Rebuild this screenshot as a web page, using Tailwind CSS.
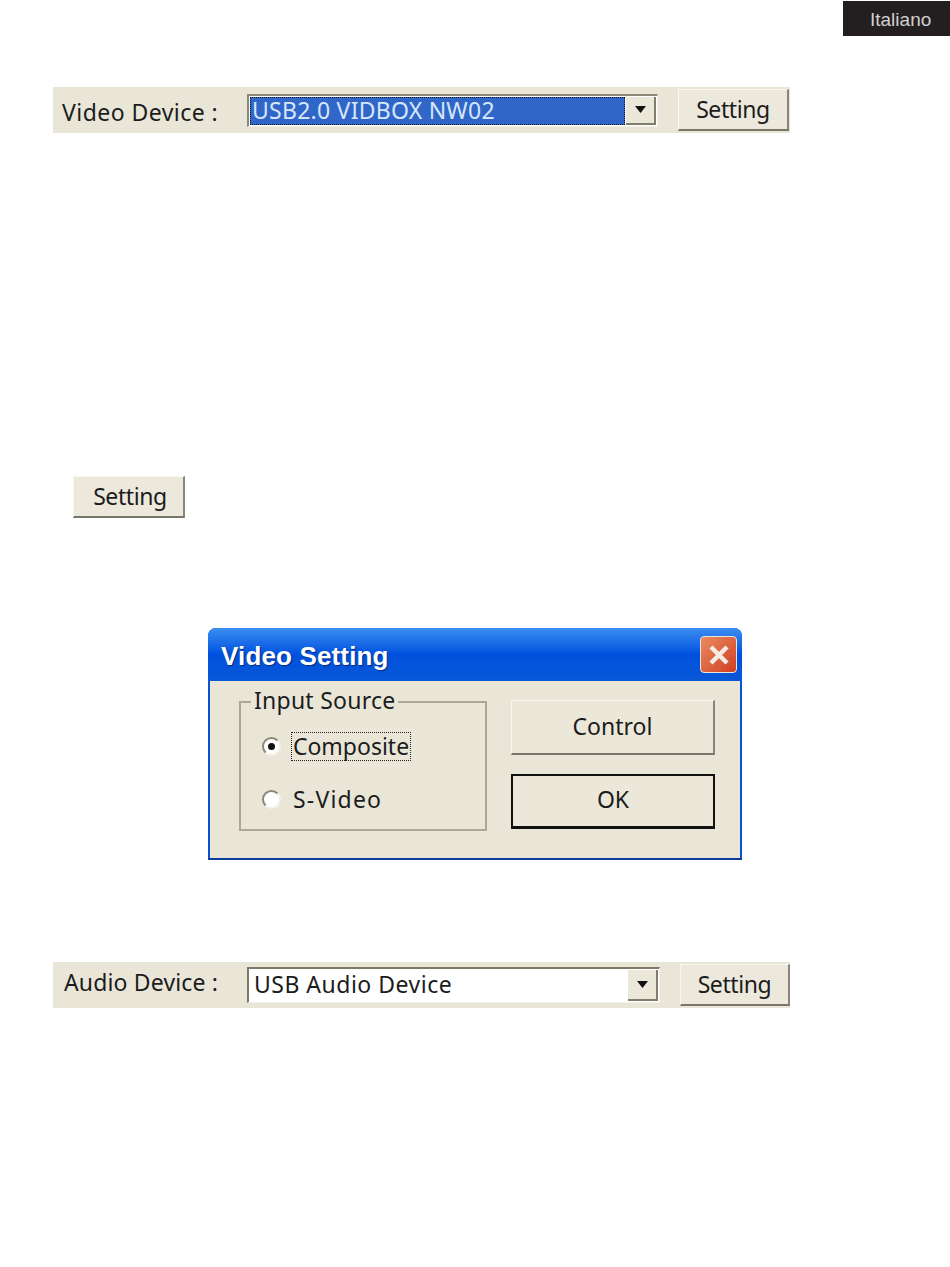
<!DOCTYPE html>
<html lang="en">
<head>
  <meta charset="UTF-8">
  <title>Italiano - Video Setting</title>
  <script src="https://cdn.jsdelivr.net/npm/@tailwindcss/browser@4"></script>
</head>
<body class="bg-white">
<div class="w-[950px] h-[1267px] overflow-hidden font-['Noto_Sans',sans-serif] text-[#1c1c1c] bg-white">

  <!-- section tab -->
  <div class="flex justify-end pt-px">
    <div class="w-[107px] h-[35px] bg-[#231f20] text-[#d0d0d0] text-[19px] font-['Liberation_Sans',sans-serif] flex items-center pl-[27px] pt-[3px]">Italiano</div>
  </div>

  <!-- video device bar -->
  <div class="mt-[51px] ml-[53px] w-[737px] h-[46px] bg-[#e9e6d8] flex items-center">
    <div class="w-[194px] pl-[9px] pt-[4px] text-[23px] leading-none tracking-[0.45px] whitespace-nowrap">Video Device :</div>
    <div class="w-[411px] h-[33px] border-l-2 border-t-2 border-[#8b8876] border-r border-b border-r-[#f4f2e8] border-b-[#f4f2e8] bg-white flex items-center p-px">
      <div class="flex-1 h-full bg-[#2f66c8] border border-dotted border-[#10151f] text-[#d6e6fa] text-[23px] leading-none tracking-[0.25px] pl-px flex items-center whitespace-nowrap">USB2.0 VIDBOX NW02</div>
      <div class="w-[30px] h-full ml-px bg-[#ebe8da] border-r-2 border-b-2 border-[#7f7d6d] flex items-center justify-center">
        <svg width="11" height="7" viewBox="0 0 11 7"><path d="M0 0h11L5.500 7z" fill="#111"/></svg>
      </div>
    </div>
    <div class="ml-5 w-[111px] h-[42px] bg-[#ece9dc] border-t border-l border-[#f8f6ef] border-r-2 border-b-2 border-r-[#87857a] border-b-[#78766a] flex items-center justify-center text-[23px] leading-none tracking-[-0.4px]">Setting</div>
  </div>

  <!-- standalone setting button -->
  <div class="mt-[343px] ml-[73px] w-[112px] h-[42px] bg-[#ece9dc] border-t border-l border-[#f8f6ef] border-r-2 border-b-2 border-r-[#87857a] border-b-[#78766a] flex items-center justify-center text-[23px] leading-none tracking-[-0.4px] pl-[3px]">Setting</div>

  <!-- video setting dialog -->
  <div class="mt-[110px] ml-[208px] w-[534px] h-[232px] rounded-t-[8px] bg-[#0b52d0] px-[2px] border-b-2 border-[#0c3c9e] flex flex-col">
    <div class="h-[53px] -mx-[2px] rounded-t-[8px] bg-gradient-to-b from-[#3b8df0] via-[#0050df] to-[#0a58d6] flex items-center justify-between pl-[13px] pr-[5px]">
      <span class="text-white text-[26px] font-bold font-['Liberation_Sans',sans-serif] pt-[3px] tracking-[0.15px] [text-shadow:1px_1px_1px_#0a2a80]">Video Setting</span>
      <div class="w-[37px] h-[37px] rounded-[4px] border border-[#e8e4e0] bg-gradient-to-br from-[#e88a60] to-[#d03c20] flex items-center justify-center">
        <svg width="24" height="24" viewBox="0 0 24 24"><path d="M4 4l16 16M20 4L4 20" stroke="#f5ece6" stroke-width="4.500" fill="none"/></svg>
      </div>
    </div>
    <div class="flex-1 bg-[#e9e6d8] flex pl-[29px] pt-[19px]">
      <fieldset class="w-[248px] h-[143px] -mt-[12px] border-2 border-[#aaa898] pl-[21px] text-[23px]">
        <legend class="ml-[-11px] px-[3px] text-[23px] leading-[24px] pb-[4px] tracking-[0.25px]">Input Source</legend>
        <div class="flex items-center h-[29px] mt-[16px]">
          <span class="w-[19px] h-[19px] rounded-full bg-white border-2 border-l-[#8b8876] border-t-[#8b8876] border-r-[#f4f2e8] border-b-[#f4f2e8] flex items-center justify-center">
            <span class="w-[7px] h-[7px] rounded-full bg-[#111]"></span>
          </span>
          <span class="ml-[10px] w-[120px] h-[29px] border border-dotted border-[#222] flex items-center justify-center leading-none">Composite</span>
        </div>
        <div class="flex items-center h-[29px] mt-[24px]">
          <span class="w-[19px] h-[19px] rounded-full bg-white border-2 border-l-[#8b8876] border-t-[#8b8876] border-r-[#f4f2e8] border-b-[#f4f2e8]"></span>
          <span class="ml-[12px] leading-none tracking-[1.2px]">S-Video</span>
        </div>
      </fieldset>
      <div class="ml-[24px] flex flex-col gap-[19px]">
        <div class="w-[204px] h-[55px] bg-[#ebe8da] border-t border-l border-[#f8f6ef] border-r-2 border-b-2 border-r-[#87857a] border-b-[#78766a] flex items-center justify-center text-[23px] leading-none pb-[2px]">Control</div>
        <div class="w-[204px] h-[55px] bg-[#ebe8da] border-2 border-[#111] border-b-[3px] flex items-center justify-center text-[23px] leading-none pb-[4px]">OK</div>
      </div>
    </div>
  </div>

  <!-- audio device bar -->
  <div class="mt-[102px] ml-[53px] w-[737px] h-[46px] bg-[#e9e6d8] flex items-center">
    <div class="w-[194px] pl-[11px] pb-[6px] text-[23px] leading-none tracking-[0.15px] whitespace-nowrap">Audio Device :</div>
    <div class="w-[413px] h-[36px] border-l-2 border-t-2 border-[#7d7a69] border-r border-b border-r-[#f4f2e8] border-b-[#f4f2e8] bg-white flex items-center p-px">
      <div class="flex-1 text-[23px] leading-none pl-[4px] pb-[2px] tracking-[0.5px] whitespace-nowrap">USB Audio Device</div>
      <div class="w-[30px] h-full bg-[#ebe8da] border-r-2 border-b-2 border-[#7f7d6d] flex items-center justify-center">
        <svg width="11" height="7" viewBox="0 0 11 7"><path d="M0 0h11L5.500 7z" fill="#111"/></svg>
      </div>
    </div>
    <div class="ml-5 w-[110px] h-[42px] bg-[#ece9dc] border-t border-l border-[#f8f6ef] border-r-2 border-b-2 border-r-[#87857a] border-b-[#78766a] flex items-center justify-center text-[23px] leading-none tracking-[-0.4px]">Setting</div>
  </div>

</div>
</body>
</html>
